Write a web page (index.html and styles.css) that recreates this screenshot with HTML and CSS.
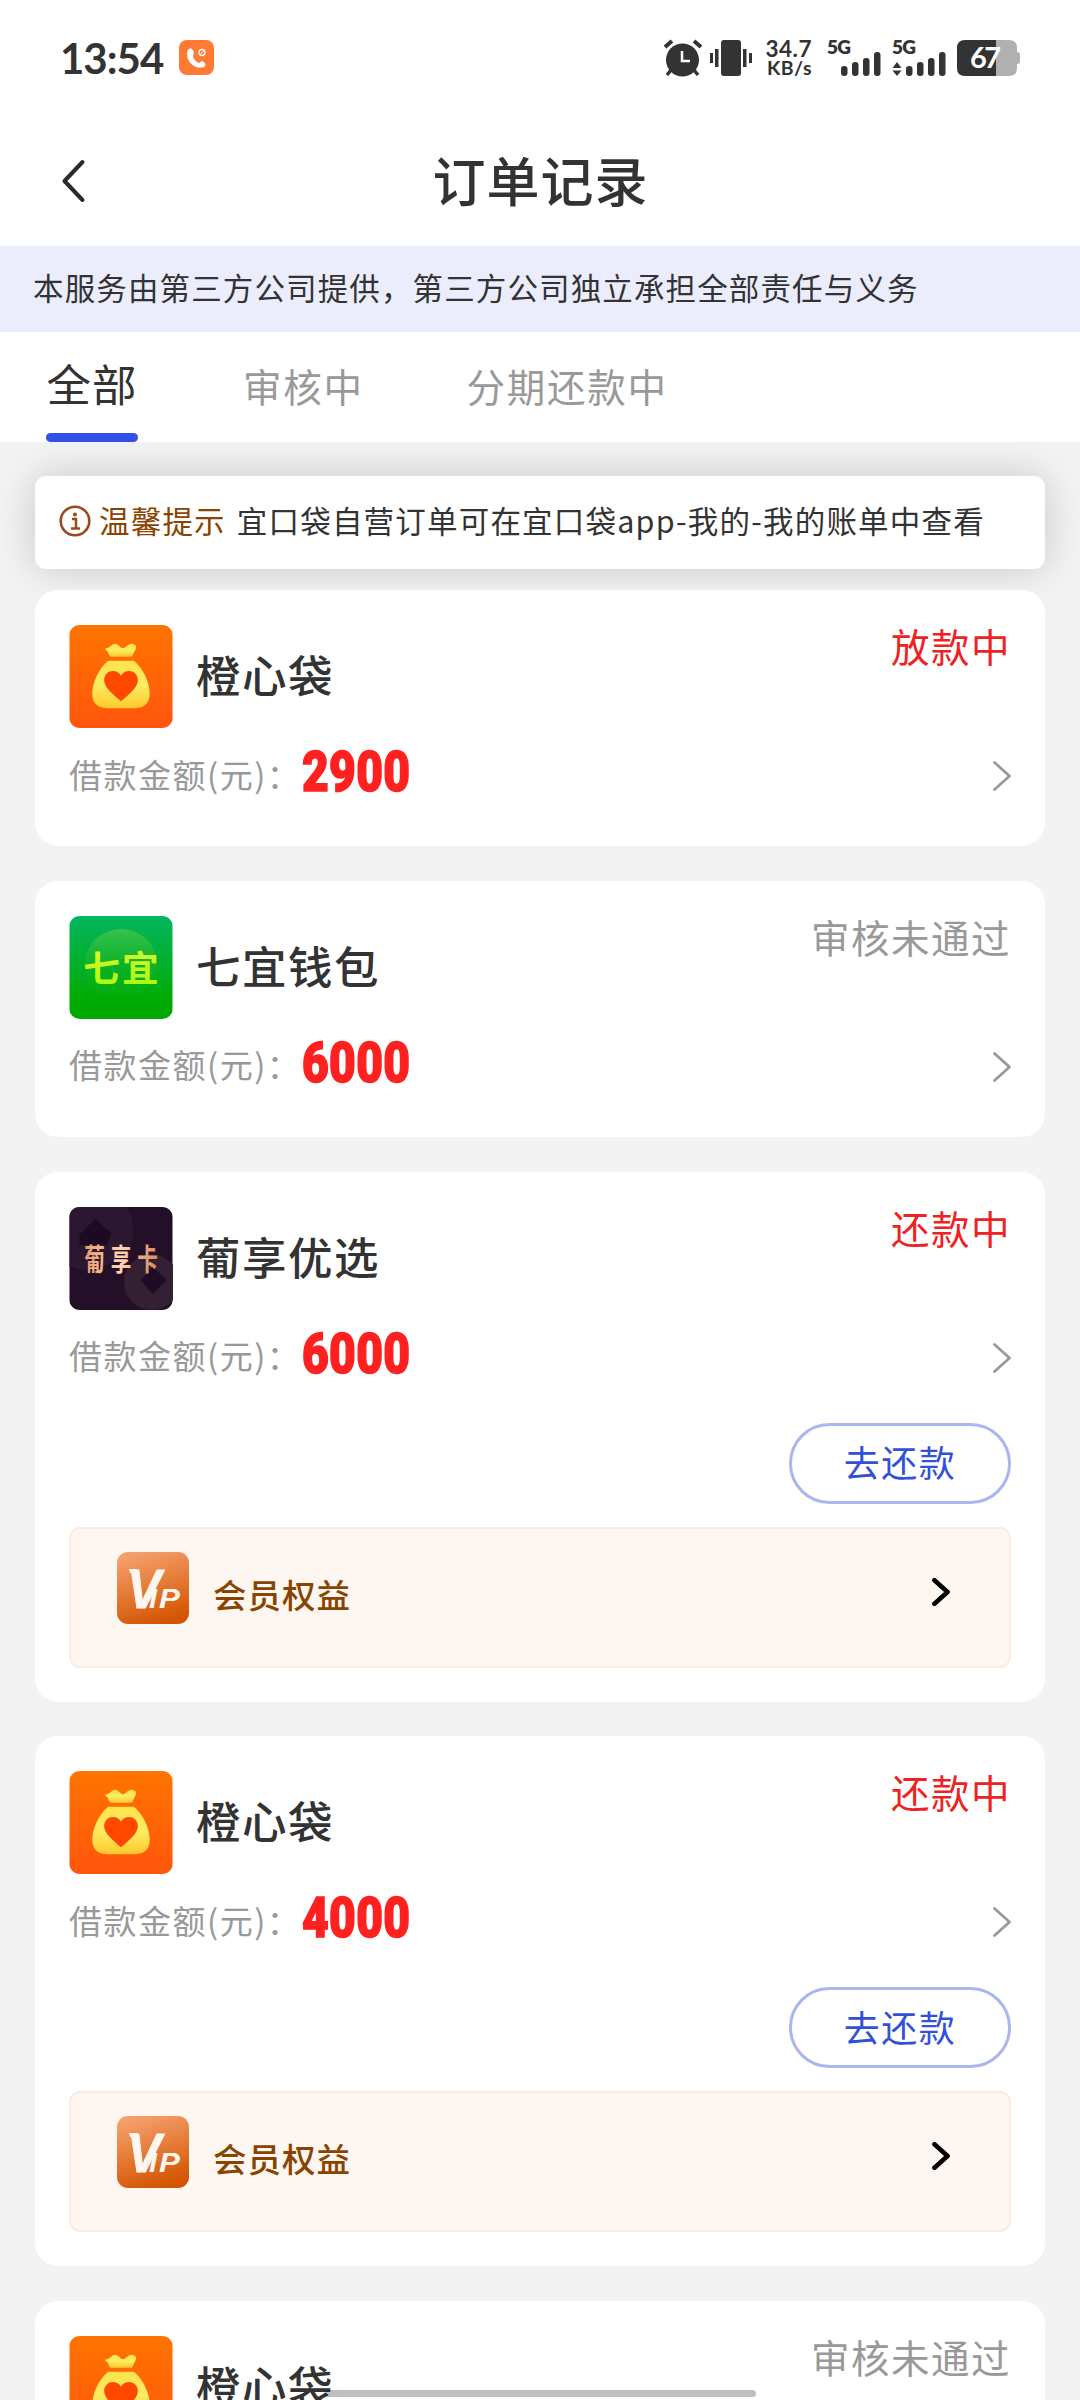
FILE: index.html
```html
<!DOCTYPE html>
<html lang="zh-CN">
<head>
<meta charset="utf-8">
<title>订单记录</title>
<link rel="stylesheet" href="styles.css">
</head>
<body>
<svg width="0" height="0" class="defs">
  <defs>
    <linearGradient id="orange" x1="0" y1="0" x2="0" y2="1"><stop offset="0" stop-color="#ff7400"/><stop offset="1" stop-color="#ff560d"/></linearGradient>
    <linearGradient id="gold" x1="0" y1="0" x2="0" y2="1"><stop offset="0" stop-color="#ffe34a"/><stop offset=".5" stop-color="#fdec62"/><stop offset="1" stop-color="#ffc92c"/></linearGradient>
    <linearGradient id="green" x1="0" y1="0" x2="0" y2="1"><stop offset="0" stop-color="#04b660"/><stop offset=".8" stop-color="#00ab04"/><stop offset="1" stop-color="#00a800"/></linearGradient>
    <linearGradient id="glow" x1="0" y1="0" x2="0" y2="1"><stop offset="0" stop-color="#6cd04a" stop-opacity=".5"/><stop offset=".6" stop-color="#3cc020" stop-opacity=".1"/><stop offset="1" stop-color="#3cc020" stop-opacity="0"/></linearGradient>
    <linearGradient id="lime" x1="0" y1="0" x2="0" y2="1"><stop offset="0" stop-color="#e8fa30"/><stop offset="1" stop-color="#9df80c"/></linearGradient>
    <linearGradient id="copper" x1="0" y1="0" x2="1" y2="0"><stop offset="0" stop-color="#e89c6c"/><stop offset=".5" stop-color="#ffd3b4"/><stop offset="1" stop-color="#d88a5c"/></linearGradient>
    <linearGradient id="vipbg" x1=".3" y1="0" x2=".6" y2="1"><stop offset="0" stop-color="#f5a06c"/><stop offset="1" stop-color="#d35400"/></linearGradient>
    <symbol id="bag" viewBox="0 0 104 104">
      <rect width="104" height="104" fill="url(#orange)"/>
      <path d="M36 24q4-1 6-3q4-4 8 0q4 5 8 0q5-4 9 0q1 3-1 5l-3 6H41l-3-6q-2 0-2-2z" fill="url(#gold)"/>
      <path d="M39 36H65C74 43 81 58 81 69Q81 84 66 84H38Q23 84 23 69C23 58 30 43 39 36z" fill="url(#gold)"/>
      <path d="M52 77C43 69 35 63 35 55.500C35 46 47 43 52 51C57 43 69 46 69 55.500C69 63 61 69 52 77z" fill="#ff4700"/>
    </symbol>
    <symbol id="qiyi" viewBox="0 0 104 104">
      <rect width="104" height="104" fill="url(#green)"/>
      <circle cx="52" cy="50" r="37" fill="url(#glow)"/>
      <text x="14" y="67" textLength="76" class="mark-qiyi">七宜</text>
    </symbol>
    <symbol id="card" viewBox="0 0 104 104">
      <rect width="104" height="104" fill="#230f27"/>
      <path d="M0 0H58Q66 12 64 30Q60 50 38 58Q20 68 0 60z" fill="#2b1730"/>
      <path d="M26 12L42 26L38 38H10V28z" fill="#1d0a22"/>
      <circle cx="83" cy="76" r="28" fill="#332032"/>
      <path d="M84 60L98 74L84 88L72 74z" fill="#1f0b23"/>
      <text x="18.500" y="56" textLength="93" transform="scale(.8 1.14)" class="mark-card">葡享卡</text>
    </symbol>
    <symbol id="vip" viewBox="0 0 72 72">
      <rect width="72" height="72" rx="11" fill="url(#vipbg)"/>
      <path d="M12 17H20V21H13z" fill="#fff7ef"/>
      <text x="10" y="56" textLength="35" lengthAdjust="spacingAndGlyphs" class="mark-v">V</text>
      <text x="32" y="56" textLength="9" lengthAdjust="spacingAndGlyphs" class="mark-ip">I</text>
      <text x="42" y="56" textLength="22" lengthAdjust="spacingAndGlyphs" class="mark-ip">P</text>
    </symbol>
    <symbol id="chev" viewBox="0 0 20 32"><path d="M2.500 2.500L17.500 16L2.500 29.500" fill="none" stroke="currentColor" stroke-linecap="round" stroke-linejoin="round"/></symbol>
  </defs>
</svg>
<div class="screen">
  <header class="status">
    <span class="time">13:54</span>
    <svg class="call" viewBox="0 0 36 36"><rect width="35" height="35" rx="8" fill="#ff7a34"/><path d="M9 10q2-3 4-1l2 3-1 4q1 5 6 7l3-2 3 2q1 3-1 4-4 1-8 0-9-4-9-14z" fill="#fff"/><circle cx="23" cy="12.500" r="3" fill="none" stroke="#fff" stroke-width="1.300"/><path d="M21 14.500l4-4" stroke="#fff"/></svg>
    <div class="tray">
      <svg width="38" height="37" viewBox="0 0 38 37"><circle cx="18.500" cy="20" r="16.500" fill="#333"/><path d="M1 7L8 1M30 1l7 6" stroke="#333" stroke-width="4"/><path d="M7 30l-4 5M30 30l4 5" stroke="#333" stroke-width="3.500"/><path d="M18 11v10h8" fill="none" stroke="#fff" stroke-width="2.500"/></svg>
      <svg class="vib" width="42" height="37" viewBox="0 0 42 37" fill="#333"><rect x="11" y="0" width="20" height="36" rx="3"/><rect x="5" y="9" width="3.500" height="18"/><rect x="0" y="13" width="3" height="10"/><rect x="33" y="9" width="3.500" height="18"/><rect x="39" y="13" width="3" height="10"/></svg>
      <div class="speed"><span>34.7</span><span class="unit">KB/s</span></div>
      <svg class="sig1" width="54" height="37" viewBox="0 0 54 37" fill="#333"><text x="0" y="14" textLength="24" class="net">5G</text><rect x="14" y="26" width="6.500" height="10" rx="3"/><rect x="25" y="22" width="6.500" height="14" rx="3"/><rect x="36" y="18" width="6.500" height="18" rx="3"/><rect x="47" y="12" width="6.500" height="24" rx="3"/></svg>
      <svg class="sig2" width="54" height="37" viewBox="0 0 54 37" fill="#333"><text x="0" y="14" textLength="24" class="net">5G</text><path d="M5 22l4.500 6h-9zM5 36l4.500-5.500h-9z"/><rect x="14" y="26" width="6.500" height="10" rx="3"/><rect x="25" y="22" width="6.500" height="14" rx="3"/><rect x="36" y="18" width="6.500" height="18" rx="3"/><rect x="47" y="12" width="6.500" height="24" rx="3"/></svg>
      <svg class="bat" width="64" height="37" viewBox="0 0 64 37"><path d="M39 0h13q8 0 8 8v20q0 8-8 8H39z" fill="#b0b0b0"/><path d="M60 12q3 0 3 3v6q0 3-3 3z" fill="#b0b0b0"/><path d="M8 0h31v36H8q-8 0-8-8V8q0-8 8-8z" fill="#333"/><text x="13" y="28" textLength="31" class="pct">67</text></svg>
    </div>
  </header>
  <nav class="titlebar">
    <svg class="back" viewBox="0 0 25 44"><path d="M21.500 3L3.500 22L21.500 41" fill="none" stroke="#2b2b2b" stroke-width="4" stroke-linecap="round" stroke-linejoin="round"/></svg>
    <h1>订单记录</h1>
  </nav>
  <div class="notice">本服务由第三方公司提供，第三方公司独立承担全部责任与义务</div>
  <div class="tabs"><span class="tab on">全部</span><span class="tab">审核中</span><span class="tab">分期还款中</span></div>
  <main>
    <div class="tip">
      <svg width="32" height="34" viewBox="0 0 32 34"><circle cx="16" cy="17" r="14.300" fill="none" stroke="#9c4a1c" stroke-width="2.600"/><circle cx="16" cy="10.500" r="2" fill="#9c4a1c"/><path d="M13 15h4v9M12 24.500h9" fill="none" stroke="#9c4a1c" stroke-width="2.500"/></svg>
      <b>温馨提示</b><span>宜口袋自营订单可在宜口袋app-我的-我的账单中查看</span>
    </div>
    <section class="order">
      <div class="head"><svg class="logo"><use href="#bag"/></svg><h2>橙心袋</h2><span class="state red">放款中</span></div>
      <div class="sum"><span class="label">借款金额(元)：</span><span class="num">2900</span><svg class="more"><use href="#chev"/></svg></div>
    </section>
    <section class="order">
      <div class="head"><svg class="logo"><use href="#qiyi"/></svg><h2>七宜钱包</h2><span class="state">审核未通过</span></div>
      <div class="sum"><span class="label">借款金额(元)：</span><span class="num">6000</span><svg class="more"><use href="#chev"/></svg></div>
    </section>
    <section class="order tall">
      <div class="head"><svg class="logo"><use href="#card"/></svg><h2>葡享优选</h2><span class="state red">还款中</span></div>
      <div class="sum"><span class="label">借款金额(元)：</span><span class="num">6000</span><svg class="more"><use href="#chev"/></svg></div>
      <button class="repay">去还款</button>
      <div class="vip"><svg class="vipicon"><use href="#vip"/></svg><span>会员权益</span><svg class="go"><use href="#chev"/></svg></div>
    </section>
    <section class="order tall">
      <div class="head"><svg class="logo"><use href="#bag"/></svg><h2>橙心袋</h2><span class="state red">还款中</span></div>
      <div class="sum"><span class="label">借款金额(元)：</span><span class="num">4000</span><svg class="more"><use href="#chev"/></svg></div>
      <button class="repay">去还款</button>
      <div class="vip"><svg class="vipicon"><use href="#vip"/></svg><span>会员权益</span><svg class="go"><use href="#chev"/></svg></div>
    </section>
    <section class="order">
      <div class="head"><svg class="logo"><use href="#bag"/></svg><h2>橙心袋</h2><span class="state">审核未通过</span></div>
    </section>
  </main>
  <div class="homebar"></div>
</div>
</body>
</html>
```
FILE: styles.css
```css
* { box-sizing: border-box; }
body {
  margin: 0;
  font-family: "Noto Sans CJK SC", sans-serif;
  color: #333;
  background: #f3f3f3;
}
svg { display: block; flex: none; }
.defs { position: absolute; }
.screen {
  position: relative;
  width: 1080px;
  height: 2400px;
  overflow: hidden;
  display: flex;
  flex-direction: column;
}

/* system status bar */
.status {
  height: 116px;
  padding: 0 60px;
  background: #fff;
  display: flex;
  align-items: center;
  flex: none;
}
.time {
  width: 119px;
  font: 700 42px/50px Lato, sans-serif;
  letter-spacing: -1px;
}
.call { width: 36px; height: 36px; }
.tray { margin-left: auto; display: flex; height: 37px; align-items: flex-start; }
.tray svg { overflow: visible; }
.vib { margin-left: 8px; }
.speed {
  margin-left: 12px;
  width: 48px;
  display: flex;
  flex-direction: column;
  align-items: flex-end;
  font: 700 22.5px/17px Lato, sans-serif;
  letter-spacing: .5px;
}
.speed .unit { font-size: 19.5px; line-height: 22px; }
.sig1 { margin-left: 15px; }
.sig2 { margin-left: 11px; }
.bat { margin-left: 11px; margin-right: -1px; }
.net { font: 800 19px Lato, sans-serif; }
.pct { font: 700 29px Lato, sans-serif; fill: #fff; }

.titlebar {
  height: 130px;
  background: #fff;
  display: grid;
  grid-template-columns: 25px 1fr 25px;
  align-items: center;
  padding: 0 60px 0 61px;
  flex: none;
}
.back { width: 25px; height: 44px; }
h1 { margin: -4px 0 0; font-size: 53px; font-weight: 500; line-height: 80px; text-align: center; letter-spacing: 1px; }

.notice {
  height: 86px;
  padding-left: 33px;
  background: #ebedfd;
  font-size: 30.5px;
  letter-spacing: 1.13px;
  line-height: 83px;
  flex: none;
}
.tabs {
  position: relative;
  z-index: 1;
  height: 110px;
  padding-left: 46px;
  background: #fff;
  display: flex;
  gap: 103px;
  flex: none;
}
.tab { font-size: 38.5px; letter-spacing: 1.7px; line-height: 106px; color: #999; }
.tab.on {
  width: 92px;
  margin-right: 2px;
  color: #333;
  font-size: 44.5px;
  letter-spacing: 1px;
  line-height: 102px;
  text-align: center;
}
.tab.on::after {
  content: "";
  display: block;
  height: 9px;
  margin-top: -1px;
  border-radius: 5px;
  background: #3150e6;
}

main { padding: 34px 35px; display: flex; flex-direction: column; }
.tip {
  height: 93px;
  margin-bottom: 21px;
  padding: 0 0 3px 24px;
  display: flex;
  align-items: center;
  border-radius: 11px;
  background: #fff;
  box-shadow: 0 0 42px rgba(0, 0, 0, .18);
  font-size: 30.5px;
  line-height: 44px;
  letter-spacing: 1.2px;
  flex: none;
}
.tip b { margin: -2px 11px 0 8px; font-weight: 400; color: #8a4300; }
.tip span { margin-top: -2px; }

/* order cards */
.order {
  position: relative;
  height: 256px;
  margin-bottom: 34.8px;
  padding: 35px 34px 0;
  border-radius: 23px;
  background: #fff;
  flex: none;
}
.order.tall { height: 530px; }
.head { height: 103px; display: flex; }
.logo { width: 104px; height: 103px; border-radius: 11px; }
h2 { margin: 0 auto 0 23px; font-size: 44.5px; font-weight: 500; letter-spacing: 1.5px; line-height: 97px; }
.state { font-size: 38.5px; letter-spacing: 1.5px; line-height: 40px; color: #999; }
.state.red { color: #ee2222; }
.sum { height: 97px; display: flex; align-items: center; }
.label { width: 233px; margin-top: -6px; font-size: 33px; letter-spacing: 1.5px; color: #999; white-space: nowrap; }
.num {
  margin-top: -9px;
  font: 900 55px/60px Roboto, sans-serif;
  letter-spacing: .4px;
  color: #ff2020;
  -webkit-text-stroke: 1.6px #ff2020;
  transform: scaleX(.84);
  transform-origin: left;
}
.more { width: 20px; height: 32px; margin: -1px -1px 0 auto; color: #999; stroke-width: 2.8px; }
.repay {
  display: block;
  width: 222px;
  height: 81px;
  margin: 16px 0 23px auto;
  padding: 0 0 4px;
  border: 3px solid #abb6ee;
  border-radius: 41px;
  background: #fff;
  color: #3350d8;
  font: 400 36px/68px "Noto Sans CJK SC", sans-serif;
  letter-spacing: 1.5px;
}
.vip {
  height: 141px;
  padding: 23px 58px 0 46px;
  display: flex;
  border: 2px solid #faebe3;
  border-radius: 11px;
  background: #fef7f1;
  color: #884400;
  font-size: 33.5px;
  font-weight: 500;
  letter-spacing: 1px;
  line-height: 84px;
}
.vipicon { width: 72px; height: 72px; margin-right: 24px; }
.go { width: 20px; height: 28px; margin: 26px 0 0 auto; color: #000; stroke-width: 5.2px; }

.mark-qiyi { font: 700 37px "Noto Sans CJK SC", sans-serif; fill: url(#lime); }
.mark-card { font: 700 26px "Noto Sans CJK SC", sans-serif; fill: url(#copper); }
.mark-v { font: italic 700 56px "Liberation Sans", sans-serif; fill: #fff7ef; stroke: #fff7ef; stroke-width: 1px; }
.mark-ip { font: italic 700 27px "Liberation Sans", sans-serif; fill: #fff7ef; }

.homebar {
  position: absolute;
  left: 325px;
  bottom: 3px;
  width: 431px;
  height: 7px;
  border-radius: 4px;
  background: rgba(0, 0, 0, .25);
}
```
